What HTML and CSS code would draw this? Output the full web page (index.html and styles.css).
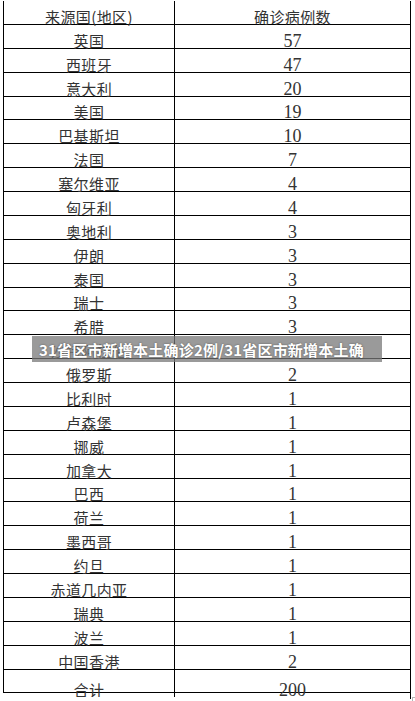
FILE: index.html
```html
<!DOCTYPE html>
<html lang="zh-CN">
<head>
<meta charset="utf-8">
<title>来源国(地区)确诊病例数</title>
<link rel="stylesheet" href="styles.css">
</head>
<body>
<div class="sheet">
  <div class="tbl">
    <div class="row"><div class="cell name">来源国(地区)</div><div class="cell name num-col">确诊病例数</div></div>
    <div class="row"><div class="cell name">英国</div><div class="cell num">57</div></div>
    <div class="row"><div class="cell name">西班牙</div><div class="cell num">47</div></div>
    <div class="row"><div class="cell name">意大利</div><div class="cell num">20</div></div>
    <div class="row"><div class="cell name">美国</div><div class="cell num">19</div></div>
    <div class="row"><div class="cell name">巴基斯坦</div><div class="cell num">10</div></div>
    <div class="row"><div class="cell name">法国</div><div class="cell num">7</div></div>
    <div class="row"><div class="cell name">塞尔维亚</div><div class="cell num">4</div></div>
    <div class="row"><div class="cell name">匈牙利</div><div class="cell num">4</div></div>
    <div class="row"><div class="cell name">奥地利</div><div class="cell num">3</div></div>
    <div class="row"><div class="cell name">伊朗</div><div class="cell num">3</div></div>
    <div class="row"><div class="cell name">泰国</div><div class="cell num">3</div></div>
    <div class="row"><div class="cell name">瑞士</div><div class="cell num">3</div></div>
    <div class="row"><div class="cell name">希腊</div><div class="cell num">3</div></div>
    <div class="row"><div class="cell name">沙特阿拉伯</div><div class="cell num">2</div></div>
    <div class="row"><div class="cell name">俄罗斯</div><div class="cell num">2</div></div>
    <div class="row"><div class="cell name">比利时</div><div class="cell num">1</div></div>
    <div class="row"><div class="cell name">卢森堡</div><div class="cell num">1</div></div>
    <div class="row"><div class="cell name">挪威</div><div class="cell num">1</div></div>
    <div class="row"><div class="cell name">加拿大</div><div class="cell num">1</div></div>
    <div class="row"><div class="cell name">巴西</div><div class="cell num">1</div></div>
    <div class="row"><div class="cell name">荷兰</div><div class="cell num">1</div></div>
    <div class="row"><div class="cell name">墨西哥</div><div class="cell num">1</div></div>
    <div class="row"><div class="cell name">约旦</div><div class="cell num">1</div></div>
    <div class="row"><div class="cell name">赤道几内亚</div><div class="cell num">1</div></div>
    <div class="row"><div class="cell name">瑞典</div><div class="cell num">1</div></div>
    <div class="row"><div class="cell name">波兰</div><div class="cell num">1</div></div>
    <div class="row"><div class="cell name">中国香港</div><div class="cell num">2</div></div>
    <div class="row last"><div class="cell name">合计</div><div class="cell num">200</div></div>
  </div>
  <div class="caption">31省区市新增本土确诊2例/31省区市新增本土确</div>
  <div class="corner"></div>
</div>
</body>
</html>
```

FILE: styles.css
```css
html, body {
  margin: 0;
  padding: 0;
  background: #ffffff;
}

.sheet {
  position: relative;
  width: 415px;
  height: 701px;
  overflow: hidden;
  padding: 1.1px 0 0 3px;
  box-sizing: border-box;
}

.tbl {
  width: 408px;
  border-left: 1px solid #000;
  box-sizing: border-box;
}

.row {
  display: grid;
  grid-template-columns: 171px 236px;
  height: 23.89px;
  box-sizing: border-box;
  border-bottom: 1px solid #000;
}

.cell {
  display: flex;
  justify-content: center;
  align-items: flex-end;
  border-right: 1px solid #000;
  color: #2a2a2a;
  white-space: nowrap;
}

.name {
  font-family: "Noto Sans CJK SC", "Noto Sans", sans-serif;
  font-size: 15px;
  line-height: 15px;
  letter-spacing: 0.4px;
  color: #333333;
}

.num {
  font-family: "Liberation Serif", "DejaVu Serif", serif;
  font-size: 18px;
  line-height: 18px;
  margin-bottom: -2px;
  color: #333333;
}

.last .cell {
  overflow: hidden;
}

.last .name {
  margin-bottom: -5px;
}

.last .num {
  margin-bottom: -7px;
}

.caption {
  position: absolute;
  left: 32px;
  top: 336px;
  width: 350px;
  height: 26px;
  box-sizing: border-box;
  padding-left: 7px;
  display: flex;
  align-items: center;
  background: rgba(120, 120, 120, 0.75);
  color: #ffffff;
  font-family: "Noto Sans CJK SC", "Noto Sans", sans-serif;
  font-weight: 700;
  font-size: 15px;
  letter-spacing: 0.2px;
  line-height: 1;
  white-space: nowrap;
  text-shadow: 0 0 2px rgba(0, 0, 0, 0.45);
}

.corner {
  position: absolute;
  left: 412px;
  top: 697px;
  width: 4px;
  height: 5px;
  border-left: 1px solid #b5b5b5;
  border-top: 1px solid #b5b5b5;
}
```
